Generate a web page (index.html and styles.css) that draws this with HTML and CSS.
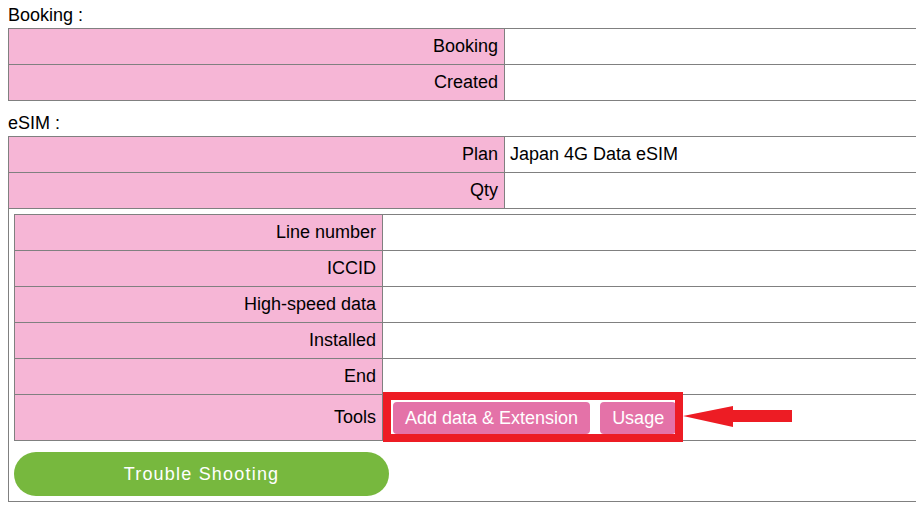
FILE: index.html
```html
<!DOCTYPE html>
<html>
<head>
  <title>Booking details</title>
  <link rel="stylesheet" href="styles.css">
</head>
<body>

<div class="page">
  <div class="section-title first">Booking :</div>
  <table class="info-table">
    <colgroup>
      <col class="label-col">
      <col>
    </colgroup>
    <tr>
      <td class="label">Booking</td>
      <td class="value"></td>
    </tr>
    <tr>
      <td class="label">Created</td>
      <td class="value"></td>
    </tr>
  </table>

  <div class="section-title">eSIM :</div>
  <table class="info-table">
    <colgroup>
      <col class="label-col">
      <col>
    </colgroup>
    <tr>
      <td class="label">Plan</td>
      <td class="value">Japan 4G Data eSIM</td>
    </tr>
    <tr>
      <td class="label">Qty</td>
      <td class="value"></td>
    </tr>
    <tr>
      <td class="line-cell" colspan="2">
        <table class="info-table line-table">
          <colgroup>
            <col class="line-label-col">
            <col>
          </colgroup>
          <tr>
            <td class="label">Line number</td>
            <td class="value"></td>
          </tr>
          <tr>
            <td class="label">ICCID</td>
            <td class="value"></td>
          </tr>
          <tr>
            <td class="label">High-speed data</td>
            <td class="value"></td>
          </tr>
          <tr>
            <td class="label">Installed</td>
            <td class="value"></td>
          </tr>
          <tr>
            <td class="label">End</td>
            <td class="value"></td>
          </tr>
          <tr>
            <td class="label tools-label">Tools</td>
            <td class="value tools-cell">
              <div class="tools">
                <button class="tool-btn">Add data &amp; Extension</button>
                <button class="tool-btn">Usage</button>
              </div>
            </td>
          </tr>
        </table>
        <button class="trouble-btn">Trouble Shooting</button>
      </td>
    </tr>
  </table>

  <!-- annotation over the tools row -->
  <div class="highlight-box"></div>
  <svg class="highlight-arrow" width="112" height="24" viewBox="0 0 112 24">
    <polygon points="0,10 50,0 50,4 109,4 109,16 50,16 50,21" fill="#ed1c24"/>
  </svg>
</div>

</body>
</html>
```

FILE: styles.css
```css
html, body {
  overflow: hidden;
}

body {
  margin: 0;
  font-family: "Liberation Sans", Arial, sans-serif;
  font-size: 18px;
  color: #000;
  background-color: #fff;
}

.page {
  position: relative;
  padding: 0 8px;
}

.section-title {
  line-height: 20px;
  padding-top: 12px;
  margin-bottom: 3px;
}

.section-title.first {
  padding-top: 5px;
}

/* CSS for tables */
.info-table {
  width: 1100px;
  table-layout: fixed;
  border-collapse: collapse;
}

.info-table td {
  border: 1px solid #808080;
  line-height: 21px;
  padding: 7px 5px;
}

.label-col {
  width: 496px;
}

.line-label-col {
  width: 368px;
}

.info-table td.label {
  background-color: #f6b6d6;
  text-align: right;
  padding-right: 6px;
}

.line-cell {
  padding: 5px 5px 5px 5px !important;
}

.line-table {
  width: 1000px;
}

/* CSS for tool buttons */
.info-table td.tools-cell {
  padding: 7px 5px 6px 5px;
}

.tools {
  display: flex;
  gap: 10px;
  padding-left: 5px;
}

.tool-btn {
  height: 32px;
  padding: 0 12px;
  border: none;
  border-radius: 4px;
  background-color: #e472a8;
  color: #fff;
  font-family: "Liberation Sans", Arial, sans-serif;
  font-size: 18px;
}

.trouble-btn {
  display: block;
  width: 375px;
  height: 44px;
  margin-top: 11px;
  border: none;
  border-radius: 22px;
  background-color: #77b83e;
  color: #fff;
  font-family: "Liberation Sans", Arial, sans-serif;
  font-size: 18px;
  letter-spacing: 1.2px;
}

/* CSS for the annotation */
.highlight-box {
  position: absolute;
  left: 383px;
  top: 392px;
  width: 284px;
  height: 34px;
  border: 8px solid #ed1c24;
}

.highlight-arrow {
  position: absolute;
  left: 683px;
  top: 406px;
}
```
